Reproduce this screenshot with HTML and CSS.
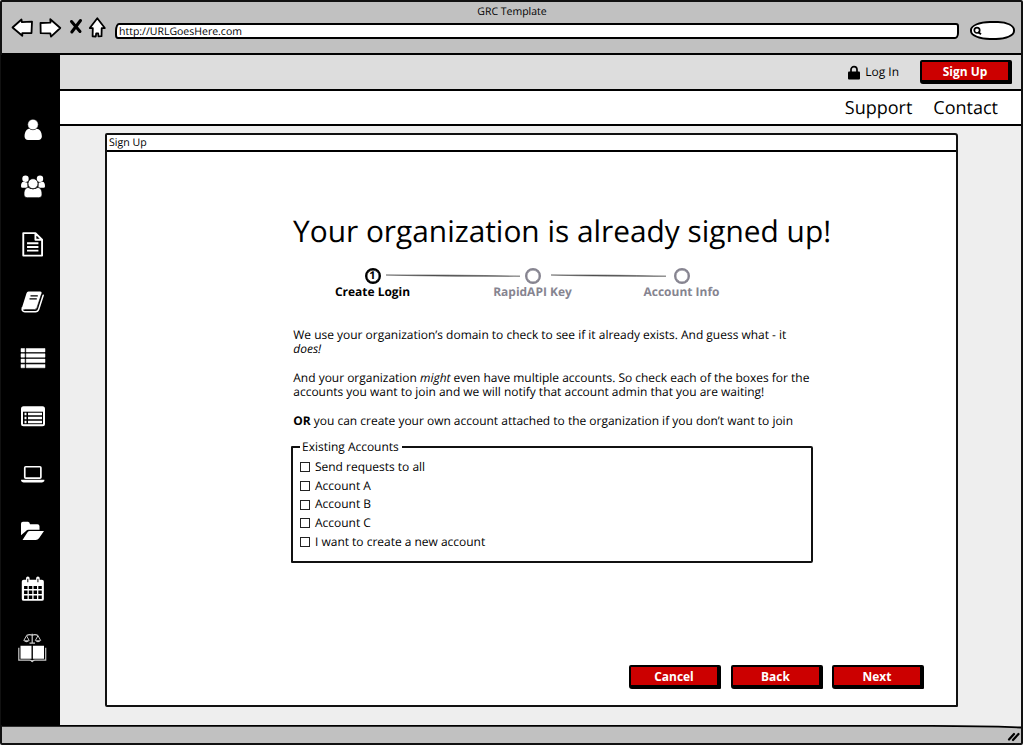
FILE: index.html
```html
<!DOCTYPE html>
<html lang="en">
<head>
<meta charset="utf-8">
<title>GRC Template</title>
<link rel="stylesheet" href="styles.css">
</head>
<body>
<div class="window">
  <header class="chrome">
    <div class="window-title">GRC Template</div>
    <div class="toolbar">
      <svg class="nav-icons" viewBox="0 14 110 26" width="110" height="26">
        <g fill="#fff" stroke="#000" stroke-width="1.8" stroke-linejoin="round">
          <path d="M12.5 27.5 21.5 19.5 21.8 22.2 32 21.6 31.5 33 22.3 33.2 22.3 35.8Z"/>
          <path d="M40.5 23 50.5 22.6 50.3 19.2 60.3 28 51 36.6 50.3 33.3 40.7 33.2Z"/>
          <path d="M97.3 18.2 104.8 28 101.7 28.2 101.5 36.2 98.5 36.4 98.2 33.3 96.2 33.3 95.8 36.5 92.6 36.3 92.8 28.2 89.8 28Z"/>
        </g>
        <path d="M71.5 21.5 80 31.5M80.5 20.5 71.8 32" fill="none" stroke="#000" stroke-width="3" stroke-linecap="round"/>
      </svg>
      <div class="url">http://URLGoesHere.com</div>
      <div class="search">
        <svg viewBox="0 0 12 12" width="12" height="12"><circle cx="5" cy="5.3" r="2.7" fill="none" stroke="#000" stroke-width="1.7"/><path d="M6 7 9 9.2" stroke="#000" stroke-width="2"/></svg>
      </div>
    </div>
  </header>
  <div class="main">
    <nav class="sidebar">
      <svg viewBox="0 101 60 58"><g fill="#fff"><path d="M24.500 137c0-5.500 2.500-8 5-8q3 2.500 7 0c3 0 5.500 3 5.500 8 0 2-1.500 3.500-3.500 3.500H28c-2 0-3.500-1.500-3.500-3.500Z"/><circle cx="33" cy="124.800" r="5.300" stroke="#000" stroke-width=".5"/></g></svg>
      <svg viewBox="0 158.500 60 57"><g fill="#fff"><circle cx="25.500" cy="179" r="3.200"/><circle cx="40" cy="179" r="3.200"/><path d="M21 186.500c0-3 1-4.500 2.500-4.500l4 1v5h-5Q21 188 21 186.500ZM45 186.500c0-3-1-4.500-2.500-4.500l-4 1v5h5Q45 188 45 186.500Z"/><path stroke="#000" stroke-width=".7" d="M24 194.500c0-4.500 1.800-6.700 4.200-6.700q4.800 3 9.600 0c2.400 0 4.200 2.200 4.200 6.700 0 2-1.200 3.500-3.200 3.500H27.200c-2 0-3.200-1.500-3.200-3.500Z"/><circle cx="33" cy="184" r="5" stroke="#000" stroke-width=".7"/></g></svg>
      <svg viewBox="0 216 60 58"><path d="M23.200 233.300H35.500L42.200 240V256H23.200ZM35.500 233.300V240H42M27 243.500H38.500M27 247.300H38.500M27 251H38.500" fill="none" stroke="#fff" stroke-width="1.900" stroke-linejoin="round"/></svg>
      <svg viewBox="0 273.500 60 57"><path d="M28.500 291.700H40.200q2 0 1.300 2L37 308.200q-.5 1.800-2.500 1.800H24q-2.200 0-2-2.200L26.500 293.500q.5-1.800 2-1.800Z" fill="#fff"/><path d="M22.300 308q-.7 4 2.500 4H35.500q2.400 0 3.200-2.500L43.200 295.500" fill="none" stroke="#fff" stroke-width="1.500" stroke-linecap="round"/><path d="M24.300 309.800H34.500q1.800 0 2.500-2L41.500 294.500" fill="none" stroke="#000" stroke-width=".6"/><path d="M30.500 296.200H37.800M29.500 299.200H36.800" stroke="#000" stroke-width="1.100"/></svg>
      <svg viewBox="0 331 60 57"><path d="M21 348.300H24.600V351.700H21ZM21 353.600H24.600V357H21ZM21 358.900H24.600V362.300H21ZM21 364.200H24.600V367.600H21ZM26.200 348.300H45V351.700H26.200ZM26.200 353.600H45V357H26.200ZM26.200 358.900H45V362.300H26.200ZM26.200 364.200H45V367.600H26.200Z" fill="#fff" stroke="#fff" stroke-width=".5"/></svg>
      <svg viewBox="0 388 60 57"><rect x="21" y="406" width="24" height="20" rx="2.500" fill="#fff"/><path d="M23 411.500H43V424H23Z"/><path d="M24.500 412.500h2v2.500h-2ZM24.500 416.500h2v2.500h-2ZM24.500 420.500h2v2.500h-2ZM28 412.500H42v2.500H28ZM28 416.500H42v2.500H28ZM28 420.500H42v2.500H28Z" fill="#fff"/></svg>
      <svg viewBox="0 445 60 58"><rect x="24.700" y="467" width="16.300" height="11.500" rx="1" fill="none" stroke="#fff" stroke-width="1.700"/><path d="M21 480H44.500V481.300q-.8 1.500-2.500 1.500H23.500q-1.700 0-2.500-1.500Z" fill="#fff"/></svg>
      <svg viewBox="0 503 60 57"><path d="M21 535V523.500q0-2 2-2H28q1.700 0 2 2.500H37.500q2 0 2 2V529.500H28.500q-1.700 0-2.500 1.200ZM22.500 539.700 27.500 532q.8-1.200 2.300-1.200H44L39 538q-1.200 1.700-3.200 1.700Z" fill="#fff"/></svg>
      <svg viewBox="0 560 60 58"><rect x="21.700" y="580" width="22.300" height="21.300" rx="2" fill="#fff"/><path d="M24 586.300h3.500v3H24ZM28.800 586.300h3.500v3h-3.500ZM33.600 586.300h3.500v3h-3.500ZM38.400 586.300h3.500v3h-3.500ZM24 590.800h3.500v3.500H24ZM28.800 590.800h3.500v3.500h-3.500ZM33.600 590.800h3.500v3.500h-3.500ZM38.400 590.800h3.500v3.500h-3.500ZM24 595.800h3.500v3.500H24ZM28.800 595.800h3.500v3.500h-3.500ZM33.600 595.800h3.500v3.500h-3.500ZM38.400 595.800h3.500v3.500h-3.500Z"/><path d="M27.800 578.500V582.500M38 578.500V582.500" stroke="#fff" stroke-width="3.600" stroke-linecap="round"/><path d="M27.800 579V582.500M38 579V582.500" stroke="#000" stroke-width="1"/></svg>
      <svg viewBox="0 618 60 57"><path d="M20.500 645.500H31.500V658.500H20.500ZM32.900 645.500H44V658.500H32.900Z" fill="#fff"/><path d="M18.800 647.500V660H29.500Q31 660 32.200 661.200 33.400 660 35 660H45.700V647.500M26.500 635.300Q29.500 633.700 32.200 635 35 633.700 38 635.300M32.200 633.500V642.500M29.500 643H35" fill="none" stroke="#ccc" stroke-width="1.200"/><path d="M26.500 635.500 23.800 640.300M26.500 635.500 29.200 640.300M38 635.500 35.300 640.300M38 635.500 40.700 640.300" stroke="#ccc" stroke-width="1"/><path d="M23.300 640H29.700Q26.500 644 23.300 640ZM34.800 640H41.200Q38 644 34.800 640ZM30 660H34.400L32.200 662Z" fill="#ccc"/></svg>
    </nav>
    <div class="page">
      <div class="account-bar">
        <svg class="lock" viewBox="0 0 12 15" width="12" height="15"><path d="M3 7V4.600a3 3 0 0 1 6 0V7" fill="none" stroke="#000" stroke-width="1.700"/><rect y="6.500" width="12" height="8" rx="1"/></svg>
        <a class="login">Log In</a>
        <button class="btn">Sign Up</button>
      </div>
      <div class="links"><a class="support">Support</a><a class="contact">Contact</a></div>
      <div class="content">
        <section class="panel">
          <div class="panel-title">Sign Up</div>
          <div class="panel-body">
            <h1 class="heading">Your organization is already signed up!</h1>
            <div class="steps">
              <div class="step active"><span class="dot">1</span><span class="step-name">Create Login</span></div>
              <svg class="line first" viewBox="0 0 134 4"><path d="M0 1Q60 .5 134 2.200 60 2.800 0 1Z"/></svg>
              <div class="step"><span class="dot"></span><span class="step-name">RapidAPI Key</span></div>
              <svg class="line second" viewBox="0 0 115 4"><path d="M0 1Q55 .5 115 2.200 55 2.800 0 1Z"/></svg>
              <div class="step"><span class="dot"></span><span class="step-name">Account Info</span></div>
            </div>
            <div class="copy">
              <p>We use your organization’s domain to check to see if it already exists. And guess what - it<br><em>does!</em></p>
              <p>And your organization <em>might</em> even have multiple accounts. So check each of the boxes for the<br>accounts you want to join and we will notify that account admin that you are waiting!</p>
              <p><b>OR</b> you can create your own account attached to the organization if you don’t want to join</p>
            </div>
            <fieldset class="accounts">
              <legend>Existing Accounts</legend>
              <label class="choice"><span class="box"></span><span>Send requests to all</span></label>
              <label class="choice"><span class="box"></span><span>Account A</span></label>
              <label class="choice"><span class="box"></span><span>Account B</span></label>
              <label class="choice"><span class="box"></span><span>Account C</span></label>
              <label class="choice"><span class="box"></span><span>I want to create a new account</span></label>
            </fieldset>
            <div class="actions">
              <button class="btn">Cancel</button>
              <button class="btn">Back</button>
              <button class="btn">Next</button>
            </div>
          </div>
        </section>
      </div>
    </div>
  </div>
  <footer class="status">
    <svg viewBox="0 0 1019 18" width="1019" height="18"><path d="M0 0H940L1019 2V0Z" fill="#eee"/><path d="M0 .9H930Q980 1 1019 2.500" fill="none" stroke="#000" stroke-width="1.800"/><path d="M1007 14.500 1012 9M1011 15 1016.500 9" stroke="#000" stroke-width="2.200" stroke-linecap="round"/></svg>
  </footer>
</div>
</body>
</html>
```

FILE: styles.css
```css
* { box-sizing: border-box; }
body { margin: 0; background: #fff; color: #000; font: 11.98px/14.35px "Open Sans", sans-serif; text-rendering: geometricPrecision; overflow: hidden; }
.window { width: 1023px; height: 745px; border: 2px solid #111; border-radius: 2px; display: flex; flex-direction: column; background: #c1c1c1; }
.chrome { height: 53px; flex: none; border-bottom: 2px solid #000; }
.window-title { height: 18px; padding-left: 1px; line-height: 20px; text-align: center; font-size: 10.5px; }
.toolbar { display: flex; height: 26px; margin-left: -2px; margin-top: -6px; }
.nav-icons { flex: none; }
.url { width: 844px; height: 16px; margin: 9px 0 0 5px; padding-left: 2px; border: 2px solid #000; border-radius: 4px 3px 4px 3px / 8px 3px 6px 4px; background: #fff; font-size: 10.500px; line-height: 14px; }
.search { width: 45px; height: 19px; margin: 7px 0 0 11px; border: 2px solid #000; border-radius: 20px 17px 19px 20px / 9px; background: #fff; }
.search svg { display: block; margin: 2px 0 0 0; }
.main { display: flex; flex: 1; min-height: 0; }
.sidebar { width: 59px; margin-left: -1px; padding-top: 46px; background: #000; display: flex; flex-direction: column; flex: none; }
.sidebar svg { display: block; flex: none; width: 60px; height: 57.4px; margin-left: -1px; }
.page { flex: 1; min-width: 0; display: flex; flex-direction: column; background: #eee; }
.account-bar { height: 36px; border-bottom: 2px solid #000; background: #ddd; display: flex; justify-content: flex-end; align-items: flex-start; padding: 5px 9px 0 0; }
.lock { margin: 5px 5px 0 0; }
.login { margin: 5px 21px 0 0; }
.links { height: 35px; border-bottom: 2px solid #000; background: #fff; display: flex; justify-content: flex-end; gap: 21px; padding-right: 23px; font-size: 18px; line-height: 35px; }
.content { flex: 1; padding: 7px 0 0 45px; }
.panel { width: 853px; height: 574px; border: 2px solid #111; border-radius: 2px 3px 1px 2px; background: #fff; }
.panel-title { height: 17px; padding-left: 2px; border-bottom: 2px solid #000; font-size: 10.6px; line-height: 17px; }
.panel-body { padding-left: 186px; }
.heading { margin: 58px 0 0; font-size: 29.85px; line-height: 42px; font-weight: 400; white-space: nowrap; }
.steps { display: flex; margin: 16px 0 0 29.5px; height: 34px; }
.step { width: 100px; flex: none; color: #868490; display: flex; flex-direction: column; align-items: center; font-weight: 700; white-space: nowrap; }
.step.active { color: #000; }
.dot { width: 16px; height: 16px; border: 2px solid currentColor; box-shadow: inset 0 0 0 .4px currentColor; border-radius: 50%; font-size: 11px; line-height: 12px; text-align: center; }
.step-name { line-height: 16px; }
.line { height: 4px; margin-top: 6px; flex: none; fill: #444; stroke: #444; stroke-width: .5; }
.line.first { width: 134px; margin-left: -37px; margin-right: -37px; }
.line.second { width: 115px; margin-left: -32px; margin-right: -34px; }
.copy { margin-top: 25.5px; padding-left: .3px; white-space: nowrap; }
.copy p { margin: 0 0 14.35px; }
.accounts { width: 522px; height: 124px; margin: -3.5px 0 0 -2px; padding: 3px 0 0 7px; border: 2px solid #111; border-radius: 1px 2px 2px 1px; }
.accounts legend { padding: 0 3px 0 2px; line-height: 16px; }
.choice { display: flex; align-items: center; height: 18.75px; }
.box { width: 10px; height: 10px; margin-right: 5px; border: 1px solid #222; }
.actions { display: flex; gap: 9.500px; margin: 102px 0 0 336px; }
.btn { width: 92px; height: 24px; margin: 0; padding: 1px 0 0 0; font: 700 11.96px/18px "Open Sans", sans-serif; color: #fff; background: #c00; border: 2px solid #000; border-right-width: 4px; border-bottom-width: 4px; border-radius: 2px 2px 1px 3px; }
.status { height: 18px; flex: none; }
.status svg { display: block; }
```
